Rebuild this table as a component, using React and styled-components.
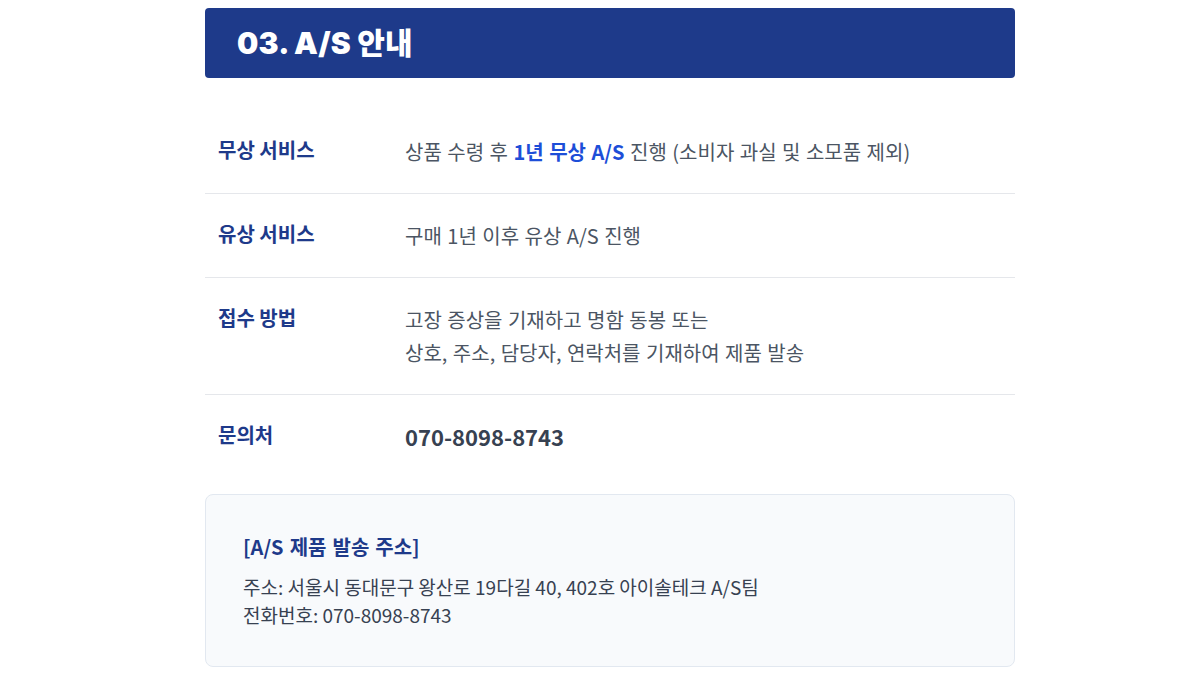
import React from "react";
import styled, { createGlobalStyle } from "styled-components";

const GlobalStyle = createGlobalStyle`
  body {
    margin: 0;
    background: #ffffff;
    font-family: "Noto Sans CJK KR", "Noto Sans", sans-serif;
  }
`;

const Section = styled.section`
  width: 810px;
  margin: 8px 0 0 205px;
`;

const TitleBar = styled.div`
  display: flex;
  align-items: center;
  height: 70px;
  padding: 0 32px 5px;
  box-sizing: border-box;
  background-color: #1e3a8a;
  border-radius: 4px;
`;

const Title = styled.h2`
  margin: 0;
  font-family: "Inter", "Noto Sans CJK KR", sans-serif;
  font-size: 30px;
  font-weight: 900;
  color: #fff;
  letter-spacing: 0.2px;
`;

const InfoList = styled.div`
  margin-top: 32px;
`;

const InfoRow = styled.div`
  display: flex;
  align-items: flex-start;
  padding: 25px 13px;
  border-bottom: 1px solid ${(props) => (props.$last ? "transparent" : "#e5e7eb")};
`;

const Label = styled.div`
  width: 187px;
  flex-shrink: 0;
  font-size: 20px;
  font-weight: 700;
  line-height: 29px;
  color: #1e3a8a;
`;

const Value = styled.div`
  font-size: 20px;
  line-height: 33px;
  word-spacing: 1px;
  color: #4b5563;
`;

const Highlight = styled.strong`
  color: #1d4ed8;
  font-weight: 700;
`;

const Phone = styled.div`
  font-size: 22px;
  font-weight: 700;
  line-height: 33px;
  color: #374151;
`;

const AddressBox = styled.div`
  margin-top: 15px;
  padding: 38px 37px 37px;
  background-color: #f8fafc;
  border: 1px solid #e2e8f0;
  border-radius: 8px;
`;

const AddressTitle = styled.div`
  font-size: 20px;
  font-weight: 700;
  color: #1e3a8a;
  line-height: 28px;
  word-spacing: 1.5px;
  margin-bottom: 12px;
`;

const AddressLine = styled.div`
  font-size: 19px;
  line-height: 28px;
  color: #374151;
`;

const rows = [
  {
    label: "무상 서비스",
    value: (
      <>
        상품 수령 후 <Highlight>1년 무상 A/S</Highlight> 진행 (소비자 과실 및 소모품 제외)
      </>
    ),
  },
  { label: "유상 서비스", value: "구매 1년 이후 유상 A/S 진행" },
  {
    label: "접수 방법",
    value: (
      <>
        고장 증상을 기재하고 명함 동봉 또는
        <br />
        상호, 주소, 담당자, 연락처를 기재하여 제품 발송
      </>
    ),
  },
];

export default function App() {
  return (
    <>
      <GlobalStyle />
      <Section>
        <TitleBar>
          <Title>03. A/S 안내</Title>
        </TitleBar>
        <InfoList>
          {rows.map((row) => (
            <InfoRow key={row.label}>
              <Label>{row.label}</Label>
              <Value>{row.value}</Value>
            </InfoRow>
          ))}
          <InfoRow $last>
            <Label>문의처</Label>
            <Phone>070-8098-8743</Phone>
          </InfoRow>
        </InfoList>
        <AddressBox>
          <AddressTitle>[A/S 제품 발송 주소]</AddressTitle>
          <AddressLine>주소: 서울시 동대문구 왕산로 19다길 40, 402호 아이솔테크 A/S팀</AddressLine>
          <AddressLine>전화번호: 070-8098-8743</AddressLine>
        </AddressBox>
      </Section>
    </>
  );
}
